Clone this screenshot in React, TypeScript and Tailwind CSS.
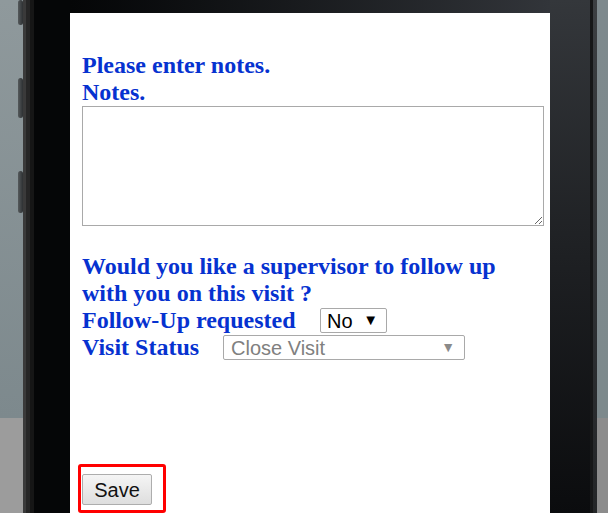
import React from "react";

const label = "font-['Liberation_Serif',serif] font-bold text-[24px] leading-[27px] text-[#0632d0]";

function SideButton({ h }: { h: number }) {
  return <div className="w-[5px] rounded-sm bg-gradient-to-r from-[#555a5c] to-[#2e3133]" style={{ height: h }} />;
}

export default function App() {
  return (
    <div className="flex h-[513px] w-[608px] overflow-hidden bg-black">
      {/* left background + side buttons */}
      <div className="flex w-[23px] shrink-0 flex-col">
        <div className="flex h-[418px] shrink-0 flex-row justify-end bg-gradient-to-b from-[#8f999c] to-[#7d898d]">
          <div className="flex flex-col gap-[53px]">
            <SideButton h={25} />
            <SideButton h={40} />
            <SideButton h={42} />
          </div>
        </div>
        <div className="flex-1 bg-[#9c9c9c]" />
      </div>
      <div className="w-[3px] shrink-0 bg-[#3a3a3a]" />
      <div className="w-[4px] shrink-0 bg-[#262626]" />
      <div className="w-[4px] shrink-0 bg-[#161616]" />
      <div className="w-[36px] shrink-0 bg-[#050607]" />

      {/* screen */}
      <div className="flex w-[480px] shrink-0 flex-col overflow-hidden">
        <div className="h-[13px] shrink-0 bg-gradient-to-r from-[#050607] to-[#32353a]" />
        <div className="flex flex-1 flex-col bg-white pl-[12px] pt-[39px]">
          <div className={label}>Please enter notes.</div>
          <div className={label}>Notes.</div>
          <textarea className="h-[120px] w-[462px] shrink-0 resize-y border border-[#a9a9a9] bg-white" />
          <div className={`${label} mt-[27px] w-[440px]`}>
            Would you like a supervisor to follow up with you on this visit ?
          </div>
          <div className="flex items-center">
            <div className={`${label} w-[238px]`}>Follow-Up requested</div>
            <div className="flex h-[25px] w-[67px] items-center justify-between rounded-[2px] border border-[#a9a9a9] pl-[6px] pr-[8px] font-['Liberation_Sans',sans-serif] text-[20px] text-black">
              <span>No</span>
              <span className="text-[15px]">▼</span>
            </div>
          </div>
          <div className="flex items-center">
            <div className={`${label} w-[141px]`}>Visit Status</div>
            <div className="flex h-[25px] w-[242px] items-center justify-between rounded-[2px] border border-[#a9a9a9] pl-[7px] pr-[9px] font-['Liberation_Sans',sans-serif] text-[20px] text-[#808080]">
              <span>Close Visit</span>
              <span className="text-[14px] text-[#8a8a8a]">▼</span>
            </div>
          </div>
          <div className="mt-[103px] ml-[-4px] h-[49px] w-[88px] shrink-0 rounded-[3px] border-[3px] border-[#ff0000] pl-[1px] pt-[7px]">
            <button
              type="button"
              className="h-[31px] w-[70px] rounded-[2px] border border-[#adadad] bg-gradient-to-b from-[#f5f5f5] to-[#dedede] font-['Liberation_Sans',sans-serif] text-[20px] text-[#111]"
            >
              Save
            </button>
          </div>
        </div>
      </div>

      {/* right bezel */}
      <div className="w-[40px] shrink-0 bg-gradient-to-b from-[#34373b] via-[#1e2023] to-[#0b0c0e]" />
      <div className="w-[3px] shrink-0 bg-[#161718]" />
      <div className="w-[4px] shrink-0 bg-gradient-to-b from-[#3c3f42] to-[#242628]" />
      <div className="flex w-[11px] shrink-0 flex-col">
        <div className="h-[418px] shrink-0 bg-gradient-to-b from-[#7e898d] to-[#7d898c]" />
        <div className="flex-1 bg-[#8c8c8c]" />
      </div>
    </div>
  );
}
